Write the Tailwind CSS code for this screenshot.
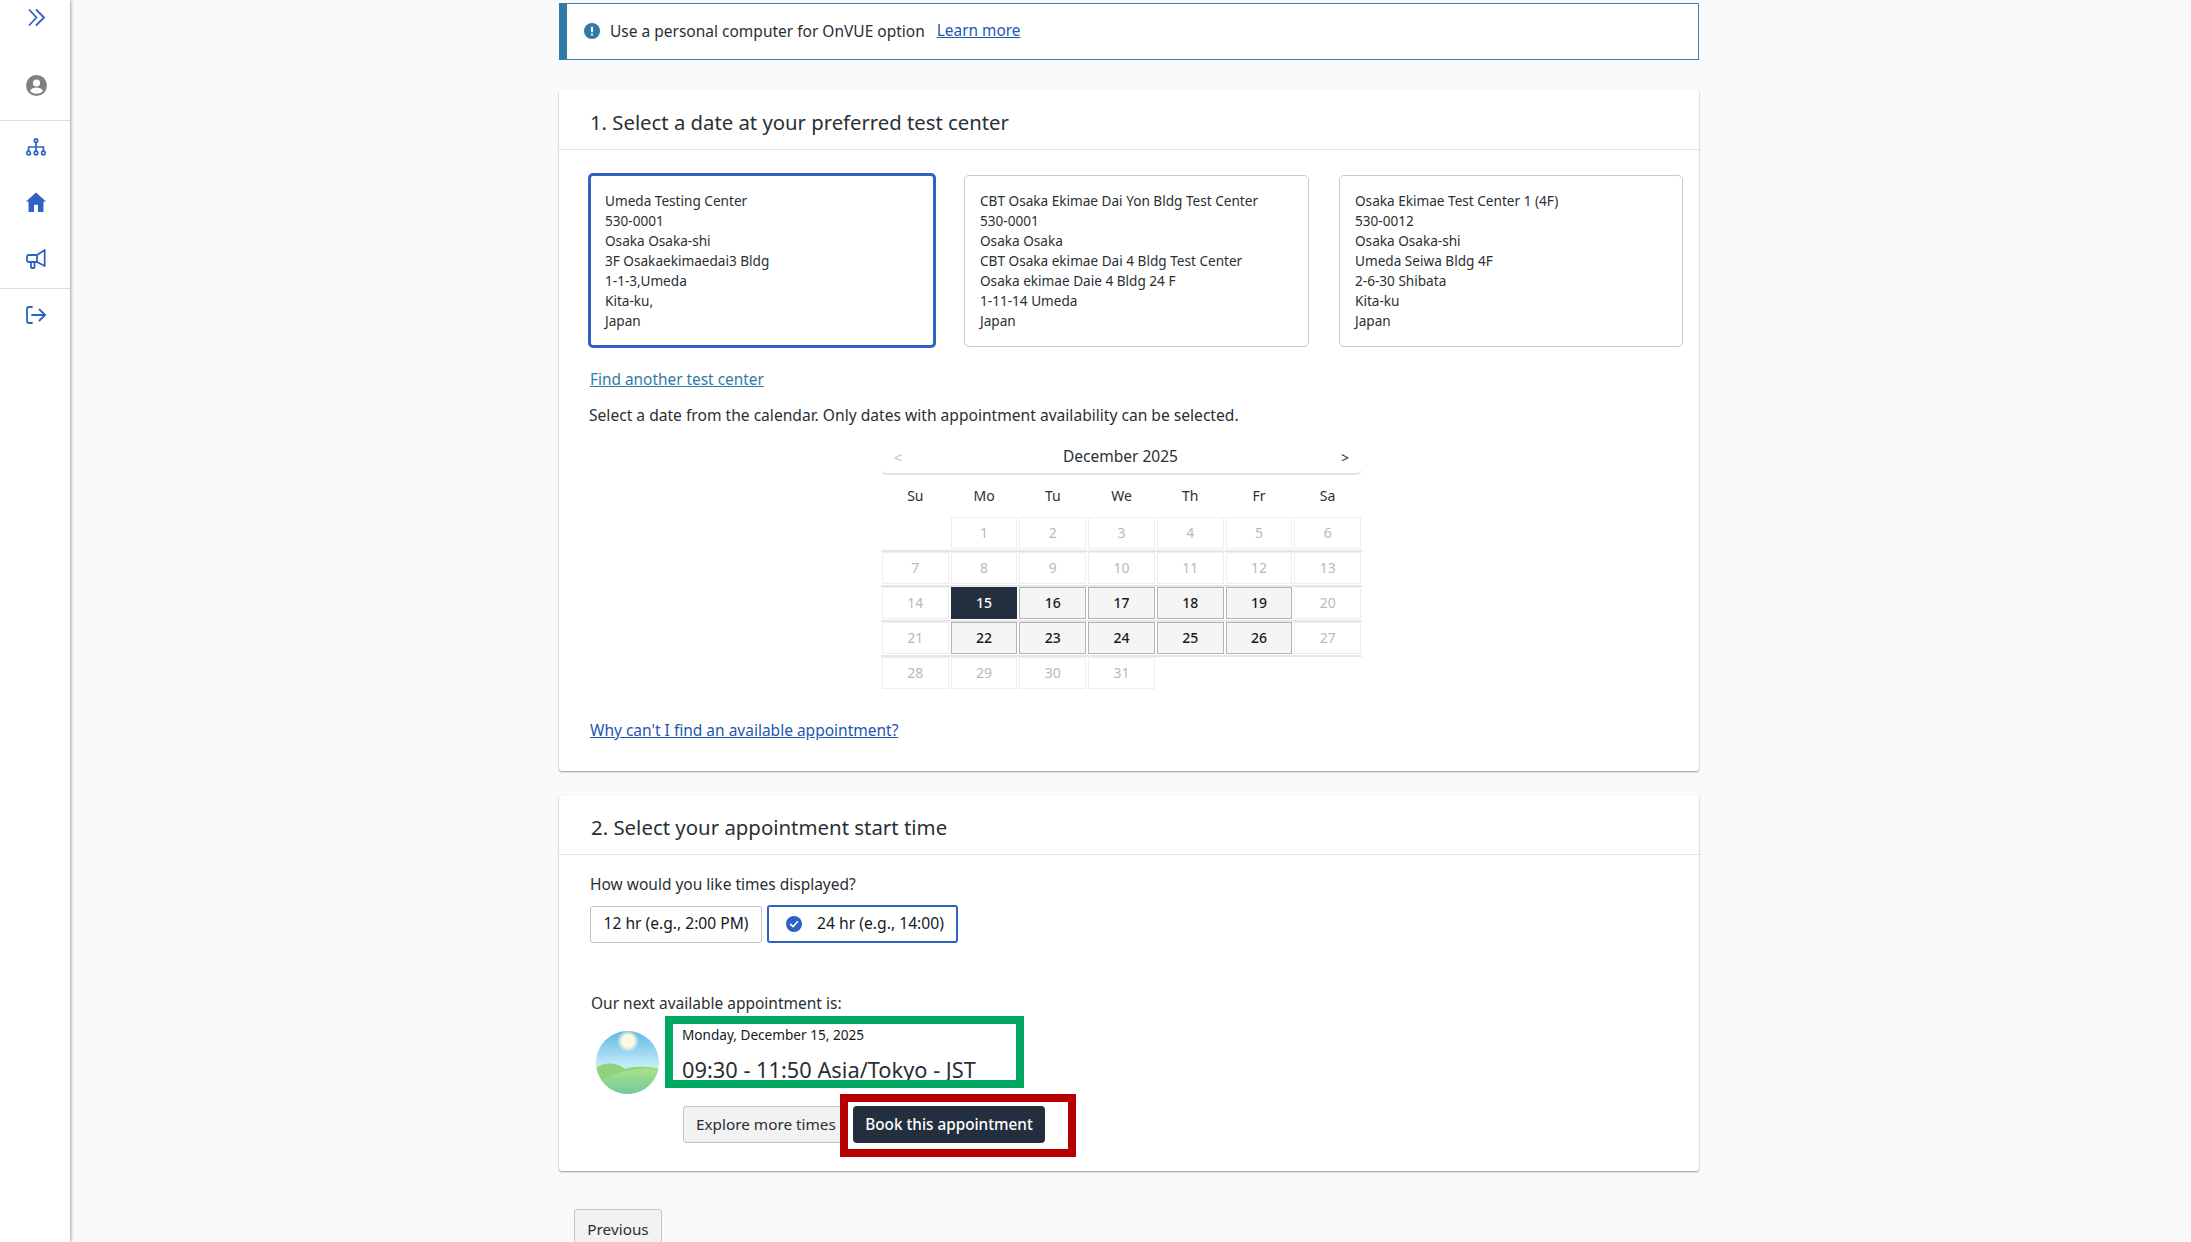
<!DOCTYPE html>
<html lang="en">
<head>
<meta charset="utf-8">
<title>Select appointment</title>
<script src="https://cdn.jsdelivr.net/npm/@tailwindcss/browser@4"></script>
</head>
<body class="bg-[#fafafa] font-['Noto_Sans',sans-serif] text-[#2b2f33]">
<div class="flex h-[1242px] overflow-hidden">
  <aside class="w-[70px] shrink-0 bg-white shadow-[1px_0_3px_rgba(0,0,0,0.35)] flex flex-col">
    <div class="h-[121px] border-b border-[#dcdcdc] flex flex-col items-center pl-[2px] pt-[8px] gap-[49px]">
      <svg class="w-[18px] h-[18px]" viewBox="0 0 18 18" fill="none" stroke="#2f62c4" stroke-width="1.8" stroke-linecap="round" stroke-linejoin="round"><path d="M2.5 2 L9.5 9.5 L2.5 17"/><path d="M9.5 2 L17 9.5 L9.5 17"/></svg>
      <svg class="w-[21px] h-[21px]" viewBox="0 0 20 20"><circle cx="10" cy="10" r="10" fill="#808080"/><circle cx="10" cy="7.6" r="3.4" fill="#fff"/><path d="M3.8 15.3 C5 12.6 7.6 12 10 12 C12.4 12 15 12.6 16.2 15.3 C14.6 17 12.4 17.8 10 17.8 C7.6 17.8 5.4 17 3.8 15.3 Z" fill="#fff"/></svg>
    </div>
    <div class="h-[168px] border-b border-[#dcdcdc] flex flex-col items-center pl-[2px] pt-[17px] gap-[36px]">
      <svg class="w-[20px] h-[18px]" viewBox="0 0 20 18" fill="none" stroke="#2f62c4" stroke-width="1.7"><circle cx="10" cy="2.6" r="1.7"/><circle cx="2.6" cy="15" r="1.8"/><circle cx="10" cy="15" r="1.8"/><circle cx="17.4" cy="15" r="1.8"/><path d="M10 4.3 V13.2 M2.6 13.2 V9 H17.4 V13.2"/></svg>
      <svg class="w-[20px] h-[20px]" viewBox="0 0 20 20"><path fill-rule="evenodd" fill="#2f62c4" d="M10 .5 L20 9.6 L17.5 9.6 L17.5 19 Q17.5 20 16.5 20 L3.5 20 Q2.5 20 2.5 19 L2.5 9.6 L0 9.6 Z M8 13.5 V20 H12 V13.5 Q12 12.8 11.3 12.8 H8.7 Q8 12.8 8 13.5 Z"/></svg>
      <svg class="w-[20px] h-[20px] translate-y-px" viewBox="0 0 20 20" fill="none" stroke="#2f62c4" stroke-width="1.8" stroke-linejoin="round" stroke-linecap="round"><path d="M18.7 1 V17 L11 13 H3 Q1 13 1 11 V8 Q1 6 3 6 H11 Z"/><path d="M11 6 V13"/><path d="M5 13 V18 Q5 19 6 19 H7.5 Q8.5 19 8.5 18 V13"/></svg>
    </div>
    <div class="flex justify-center pl-[2px] pt-[17px]">
      <svg class="w-[20px] h-[18px]" viewBox="0 0 20 18" fill="none" stroke="#2f62c4" stroke-width="1.8" stroke-linecap="round" stroke-linejoin="round"><path d="M6 1 H3 Q1 1 1 3 V15 Q1 17 3 17 H6"/><path d="M6 9 H19"/><path d="M13.5 3.5 L19 9 L13.5 14.5"/></svg>
    </div>
  </aside>

  <main class="ml-[489px] w-[1140px] shrink-0 pt-[3px]">
    <div class="h-[57px] bg-white border border-[#3f83ad] border-l-[8px] border-l-[#2f7ba5] flex items-center pl-[17px] pb-[2px] mb-[30px]">
      <svg class="w-[16px] h-[16px] mr-[10px]" viewBox="0 0 16 16"><circle cx="8" cy="8" r="8" fill="#2f7ba5"/><rect x="7" y="3.4" width="2" height="6" rx="1" fill="#fff"/><circle cx="8" cy="11.6" r="1.1" fill="#fff"/></svg>
      <span class="text-[15.5px] leading-6">Use a personal computer for OnVUE option</span>
      <a class="text-[15.4px] leading-6 ml-[12px] text-[#2456b0] underline">Learn more</a>
    </div>

    <section class="bg-white rounded-[3px] shadow-[0_1px_2px_rgba(0,0,0,0.4)] mb-[24px]">
      <div class="h-[60px] border-b border-[#e3e3e3] flex items-center pl-[31px] pt-[5px]">
        <h2 class="text-[20.3px] text-[#2b3036]">1. Select a date at your preferred test center</h2>
      </div>
      <div class="pl-[29px] pt-[23px] pb-[29px]">
        <div class="flex items-center h-[175px]">
          <div class="w-[348px] h-[175px] rounded-[5px] border-[3px] border-[#2f62c4] px-[14px] pt-[15px] text-[13.6px] leading-5">
            <p>Umeda Testing Center</p><p>530-0001</p><p>Osaka Osaka-shi</p><p>3F Osakaekimaedai3 Bldg</p><p>1-1-3,Umeda</p><p>Kita-ku,</p><p>Japan</p>
          </div>
          <div class="ml-[28px] w-[345px] h-[172px] rounded-[5px] border border-[#c9c9c9] px-[15px] pt-[15px] text-[13.6px] leading-5">
            <p>CBT Osaka Ekimae Dai Yon Bldg Test Center</p><p>530-0001</p><p>Osaka Osaka</p><p>CBT Osaka ekimae Dai 4 Bldg Test Center</p><p>Osaka ekimae Daie 4 Bldg 24 F</p><p>1-11-14 Umeda</p><p>Japan</p>
          </div>
          <div class="ml-[30px] w-[344px] h-[172px] rounded-[5px] border border-[#c9c9c9] px-[15px] pt-[15px] text-[13.6px] leading-5">
            <p>Osaka Ekimae Test Center 1 (4F)</p><p>530-0012</p><p>Osaka Osaka-shi</p><p>Umeda Seiwa Bldg 4F</p><p>2-6-30 Shibata</p><p>Kita-ku</p><p>Japan</p>
          </div>
        </div>
        <a class="block mt-[20px] ml-[2px] text-[15.4px] leading-6 text-[#2f7ba5] underline">Find another test center</a>
        <p class="mt-[11px] ml-px text-[15.6px] leading-6">Select a date from the calendar. Only dates with appointment availability can be selected.</p>

        <div class="mt-[13px] ml-[293px] w-[481px]">
          <div class="h-[35px] flex items-center justify-between border-b-2 border-[#e3e3e3] rounded-b-[6px] pl-[13px] pr-[13px]">
            <span class="text-[#bdbdbd] text-[14px] translate-y-px">&lt;</span>
            <span class="text-[15.5px] -translate-x-px">December 2025</span>
            <span class="text-[14px] translate-y-px">&gt;</span>
          </div>
          <div class="h-[42px] px-px pb-px grid grid-cols-7 gap-x-[2px] items-center text-center text-[14px]">
            <span>Su</span><span>Mo</span><span>Tu</span><span>We</span><span>Th</span><span>Fr</span><span>Sa</span>
          </div>
          <div class="px-px grid grid-cols-7 gap-x-[2px] border-b-2 border-[#e6e6e6] pb-px text-center text-[14px] leading-[30px] text-[#b9b9b9]">
            <span class="h-[32px]"></span>
            <span class="h-[32px] border border-[#efefef]">1</span><span class="h-[32px] border border-[#efefef]">2</span><span class="h-[32px] border border-[#efefef]">3</span><span class="h-[32px] border border-[#efefef]">4</span><span class="h-[32px] border border-[#efefef]">5</span><span class="h-[32px] border border-[#efefef]">6</span>
          </div>
          <div class="px-px grid grid-cols-7 gap-x-[2px] border-b-2 border-[#e6e6e6] pb-px text-center text-[14px] leading-[30px] text-[#b9b9b9]">
            <span class="h-[32px] border border-[#efefef]">7</span><span class="h-[32px] border border-[#efefef]">8</span><span class="h-[32px] border border-[#efefef]">9</span><span class="h-[32px] border border-[#efefef]">10</span><span class="h-[32px] border border-[#efefef]">11</span><span class="h-[32px] border border-[#efefef]">12</span><span class="h-[32px] border border-[#efefef]">13</span>
          </div>
          <div class="px-px grid grid-cols-7 gap-x-[2px] border-b-2 border-[#e6e6e6] pb-px text-center text-[14px] leading-[30px] text-[#b9b9b9]">
            <span class="h-[32px] border border-[#efefef]">14</span>
            <span class="h-[32px] border border-[#232f3e] bg-[#232f3e] text-white font-medium">15</span>
            <span class="h-[32px] border border-[#b4b4b4] bg-[#f5f5f5] text-[#16191f] font-medium">16</span><span class="h-[32px] border border-[#b4b4b4] bg-[#f5f5f5] text-[#16191f] font-medium">17</span><span class="h-[32px] border border-[#b4b4b4] bg-[#f5f5f5] text-[#16191f] font-medium">18</span><span class="h-[32px] border border-[#b4b4b4] bg-[#f5f5f5] text-[#16191f] font-medium">19</span>
            <span class="h-[32px] border border-[#efefef]">20</span>
          </div>
          <div class="px-px grid grid-cols-7 gap-x-[2px] border-b-2 border-[#e6e6e6] pb-px text-center text-[14px] leading-[30px] text-[#b9b9b9]">
            <span class="h-[32px] border border-[#efefef]">21</span>
            <span class="h-[32px] border border-[#b4b4b4] bg-[#f5f5f5] text-[#16191f] font-medium">22</span><span class="h-[32px] border border-[#b4b4b4] bg-[#f5f5f5] text-[#16191f] font-medium">23</span><span class="h-[32px] border border-[#b4b4b4] bg-[#f5f5f5] text-[#16191f] font-medium">24</span><span class="h-[32px] border border-[#b4b4b4] bg-[#f5f5f5] text-[#16191f] font-medium">25</span><span class="h-[32px] border border-[#b4b4b4] bg-[#f5f5f5] text-[#16191f] font-medium">26</span>
            <span class="h-[32px] border border-[#efefef]">27</span>
          </div>
          <div class="px-px grid grid-cols-7 gap-x-[2px] text-center text-[14px] leading-[30px] text-[#b9b9b9]">
            <span class="h-[32px] border border-[#efefef]">28</span><span class="h-[32px] border border-[#efefef]">29</span><span class="h-[32px] border border-[#efefef]">30</span><span class="h-[32px] border border-[#efefef]">31</span>
          </div>
        </div>
        <a class="block mt-[29px] ml-[2px] text-[15.5px] leading-6 text-[#2456b0] underline">Why can't I find an available appointment?</a>
      </div>
    </section>

    <section class="bg-white rounded-[3px] shadow-[0_1px_2px_rgba(0,0,0,0.4)] pb-[14px] mb-[38px]">
      <div class="h-[60px] border-b border-[#e3e3e3] flex items-center pl-[32px] pt-[5px]">
        <h2 class="text-[20.4px] text-[#2b3036]">2. Select your appointment start time</h2>
      </div>
      <div class="pl-[31px] pt-[17px]">
        <p class="text-[15.5px] leading-6">How would you like times displayed?</p>
        <div class="mt-[9px] flex items-center gap-[5px] h-[38px]">
          <button class="w-[172px] h-[37px] bg-white border border-[#c4c4c4] rounded-[3px] text-[15.6px] text-[#16191f]">12 hr (e.g., 2:00 PM)</button>
          <button class="w-[191px] h-[38px] bg-white border-2 border-[#2f62c4] rounded-[3px] text-[15.7px] text-[#16191f] flex items-center pl-[17px]">
            <svg class="w-[16px] h-[16px] mr-[15px]" viewBox="0 0 16 16"><circle cx="8" cy="8" r="8" fill="#2f62c4"/><path d="M4.6 8.3 L7 10.6 L11.4 5.8" fill="none" stroke="#fff" stroke-width="1.6" stroke-linecap="round" stroke-linejoin="round"/></svg>24 hr (e.g., 14:00)
          </button>
        </div>
        <p class="mt-[48px] ml-px text-[15.5px] leading-6">Our next available appointment is:</p>
      </div>
      <div class="mt-px pl-[37px] flex items-start">
        <svg class="w-[63px] h-[63px] mt-[15px] shrink-0" viewBox="0 0 63 63">
          <defs>
            <linearGradient id="sky" x1="0" y1="0" x2="0" y2="1"><stop offset="0" stop-color="#5db8e6"/><stop offset="0.55" stop-color="#c4ebf8"/></linearGradient>
            <linearGradient id="grass" x1="0" y1="0" x2="0" y2="1"><stop offset="0" stop-color="#a9e285"/><stop offset="1" stop-color="#74c9a0"/></linearGradient>
            <radialGradient id="sun"><stop offset="0.55" stop-color="#fffbe0"/><stop offset="1" stop-color="#fffbe0" stop-opacity="0"/></radialGradient>
            <clipPath id="disc"><ellipse cx="31.5" cy="31.5" rx="31.5" ry="31.5"/></clipPath>
          </defs>
          <g clip-path="url(#disc)">
            <rect width="63" height="63" fill="url(#sky)"/>
            <circle cx="32" cy="10" r="11" fill="url(#sun)"/>
            <path d="M0 37 C8 31 20 31 29 38 C38 35 52 35 63 38 V63 H0 Z" fill="#8fd47a"/>
            <path d="M0 55 C12 42 38 36 63 38 V63 H0 Z" fill="url(#grass)"/>
          </g>
        </svg>
        <div class="ml-[6px] w-[359px] h-[72px] border-[8px] border-[#00a862] bg-white overflow-hidden pl-[9px] pt-px">
          <p class="text-[13.6px] leading-5 text-[#16191f]">Monday, December 15, 2025</p>
          <p class="mt-[10px] text-[21.8px] leading-[30px] text-[#2b2f33]">09:30 - 11:50 Asia/Tokyo - JST</p>
        </div>
      </div>
      <div class="pl-[124px] flex items-start">
        <button class="mt-[12px] w-[166px] h-[37px] bg-[#f2f2f2] border border-[#c4c4c4] rounded-[3px] text-left pl-[12px] text-[15.3px] text-[#2b2f33]">Explore more times</button>
        <div class="relative -ml-[9px] w-[236px] h-[63px] border-[8px] border-[#b80000] bg-white pl-[5px] pt-[4px]">
          <button class="w-[192px] h-[37px] bg-[#232f3e] rounded-[4px] text-white text-[15.3px] font-medium">Book this appointment</button>
        </div>
      </div>
    </section>

    <button class="ml-[15px] w-[88px] h-[40px] bg-[#f2f2f2] border border-[#c4c4c4] rounded-[3px] text-[15.3px] text-[#2b2f33]">Previous</button>
  </main>
</div>
</body>
</html>
